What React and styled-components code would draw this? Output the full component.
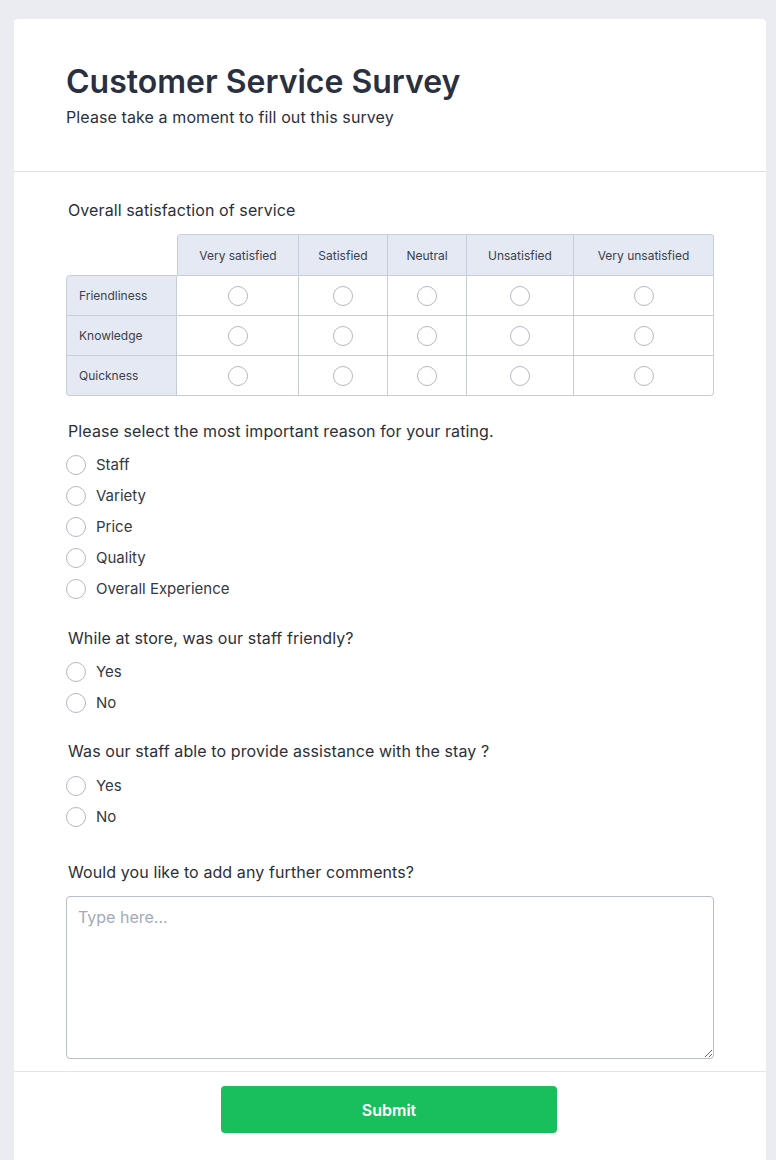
import { Fragment } from 'react';
import styled, { createGlobalStyle } from 'styled-components';

const GlobalStyle = createGlobalStyle`
    body{
        margin: 0;
        background: #ebecf1;
        font-family: Inter, "Noto Sans", sans-serif;
        color: #2b2f3b;
    }
    *{
        box-sizing: border-box;
    }
`;

const Card = styled.div`
    margin: 19px 0 0 14px;
    width: 752px;
    background: #fff;
    border-radius: 4px 4px 0 0;
`;

const Header = styled.header`
    padding: 43px 52px 43px 52px;
    border-bottom: 1px solid #dcdde3;
    h1{
        margin: 0;
        font-size: 32px;
        line-height: 40px;
        font-weight: 600;
        color: #2b3040;
    }
    p{
        margin: 4px 0 0;
        font-size: 16px;
        line-height: 22px;
        letter-spacing: 0.1px;
        color: #2b3040;
    }
`;

const Body = styled.div`
    padding: 27px 52px 12px;
    display: flex;
    flex-direction: column;
`;

const Question = styled.section`
    margin-top: ${({ $top }) => $top || 0}px;
`;

const Title = styled.h3`
    margin: 0 0 0 2px;
    font-size: 16px;
    line-height: 22px;
    letter-spacing: 0.1px;
    font-weight: 400;
    color: #2b2f3b;
`;

const Matrix = styled.div`
    margin-top: 13px;
    display: grid;
    grid-template-columns: 111px 122px 89px 79px 107px 140px;
    grid-template-rows: 42px repeat(3, 40px);
    font-size: 12px;
    color: #3a3f4d;
`;

const Cell = styled.div`
    display: flex;
    align-items: center;
    justify-content: center;
    border-color: #c8ccd8;
    border-style: solid;
    border-width: 0 1px 1px 0;
`;

const Corner = styled.div``;

const HeadCell = styled(Cell)`
    background: #e5e9f4;
    border-top-width: 1px;
    border-left-width: ${({ $first }) => ($first ? 1 : 0)}px;
    border-top-left-radius: ${({ $first }) => ($first ? 4 : 0)}px;
    border-top-right-radius: ${({ $last }) => ($last ? 4 : 0)}px;
`;

const RowLabel = styled(Cell)`
    justify-content: flex-start;
    padding-left: 12px;
    background: #e5e9f4;
    border-left-width: 1px;
    border-top-width: ${({ $first }) => ($first ? 1 : 0)}px;
    margin-top: ${({ $first }) => ($first ? -1 : 0)}px;
    border-top-left-radius: ${({ $first }) => ($first ? 4 : 0)}px;
    border-bottom-left-radius: ${({ $last }) => ($last ? 4 : 0)}px;
`;

const DataCell = styled(Cell)`
    border-bottom-right-radius: ${({ $corner }) => ($corner ? 4 : 0)}px;
`;

const Circle = styled.span`
    display: inline-block;
    width: 20px;
    height: 20px;
    border-radius: 50%;
    border: 1px solid #b4b8c3;
    background: #fff;
    flex-shrink: 0;
`;

const Options = styled.div`
    margin-top: ${({ $top }) => $top}px;
    display: flex;
    flex-direction: column;
`;

const Option = styled.label`
    display: flex;
    align-items: center;
    gap: 10px;
    height: 31px;
    font-size: 15px;
    color: #343846;
`;

const Comments = styled.textarea`
    display: block;
    margin-top: 13px;
    width: 648px;
    height: 163px;
    padding: 10px 11px;
    border: 1px solid #b9bccb;
    border-radius: 4px;
    font-family: Inter, "Noto Sans", sans-serif;
    font-size: 16px;
    color: #2b2f3b;
    outline: none;
    &::placeholder{
        color: #a3a9b9;
    }
`;

const Footer = styled.footer`
    border-top: 1px solid #e3e4ea;
    padding: 14px 2px 27px 0;
    display: flex;
    justify-content: center;
`;

const SubmitButton = styled.button`
    width: 336px;
    height: 47px;
    border: none;
    border-radius: 4px;
    background: #19bf5c;
    color: #fff;
    font-family: Inter, "Noto Sans", sans-serif;
    font-size: 16px;
    font-weight: 600;
`;

const columns = ['Very satisfied', 'Satisfied', 'Neutral', 'Unsatisfied', 'Very unsatisfied'];
const rows = ['Friendliness', 'Knowledge', 'Quickness'];
const reasons = ['Staff', 'Variety', 'Price', 'Quality', 'Overall Experience'];

function RadioList({ items, top }) {
    return (
        <Options $top={top}>
            {items.map(item => (
                <Option key={item}>
                    <Circle />
                    {item}
                </Option>
            ))}
        </Options>
    );
}

export default function App(){
    return (
        <>
            <GlobalStyle />
            <Card>
                <Header>
                    <h1>Customer Service Survey</h1>
                    <p>Please take a moment to fill out this survey</p>
                </Header>
                <Body>
                    <Question>
                        <Title>Overall satisfaction of service</Title>
                        <Matrix>
                            <Corner />
                            {columns.map((c, i) => (
                                <HeadCell key={c} $first={i === 0} $last={i === columns.length - 1}>{c}</HeadCell>
                            ))}
                            {rows.map((r, ri) => (
                                <Fragment key={r}>
                                    <RowLabel $first={ri === 0} $last={ri === rows.length - 1}>{r}</RowLabel>
                                    {columns.map((c, ci) => (
                                        <DataCell key={c} $corner={ri === rows.length - 1 && ci === columns.length - 1}>
                                            <Circle />
                                        </DataCell>
                                    ))}
                                </Fragment>
                            ))}
                        </Matrix>
                    </Question>
                    <Question $top={24}>
                        <Title>Please select the most important reason for your rating.</Title>
                        <RadioList items={reasons} top={7} />
                    </Question>
                    <Question $top={23}>
                        <Title>While at store, was our staff friendly?</Title>
                        <RadioList items={['Yes', 'No']} top={7} />
                    </Question>
                    <Question $top={22}>
                        <Title>Was our staff able to provide assistance with the stay ?</Title>
                        <RadioList items={['Yes', 'No']} top={8} />
                    </Question>
                    <Question $top={29}>
                        <Title>Would you like to add any further comments?</Title>
                        <Comments placeholder='Type here...' />
                    </Question>
                </Body>
                <Footer>
                    <SubmitButton>Submit</SubmitButton>
                </Footer>
            </Card>
        </>
    );
}
